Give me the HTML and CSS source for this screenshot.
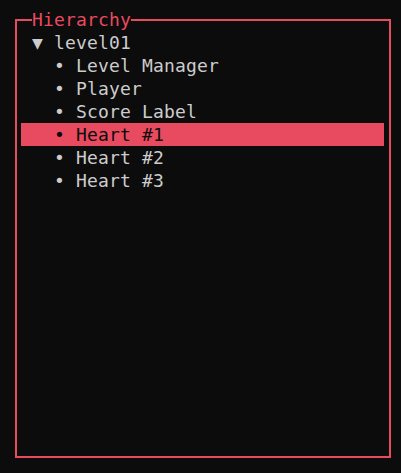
FILE: index.html
```html
<!DOCTYPE html>
<html>
<head>
<meta charset="utf-8">
<link rel="stylesheet" href="styles.css">
</head>
<body>
<div class="panel">
  <div class="title">Hierarchy</div>
  <ul class="tree">
    <li class="row root"><span class="mark">▼</span> level01</li>
    <li class="row child"><span class="mark">•</span> Level Manager</li>
    <li class="row child"><span class="mark">•</span> Player</li>
    <li class="row child"><span class="mark">•</span> Score Label</li>
    <li class="row child selected"><span class="mark">•</span> Heart #1</li>
    <li class="row child"><span class="mark">•</span> Heart #2</li>
    <li class="row child"><span class="mark">•</span> Heart #3</li>
  </ul>
</div>
</body>
</html>
```
FILE: styles.css
```css
html, body {
  margin: 0;
  padding: 0;
  background: #0c0c0c;
}
body {
  font-family: "DejaVu Sans Mono", "Liberation Mono", monospace;
  font-size: 18px;
  letter-spacing: 0.16px;
  line-height: 23px;
  color: #cccccc;
  padding: 19px 0 0 15px;
}
.panel {
  position: relative;
  width: 372px;
  height: 435px;
  border: 2px solid #e84a5f;
}
.title {
  position: absolute;
  top: -13px;
  left: 15px;
  height: 23px;
  background: #0c0c0c;
  color: #e84a5f;
  white-space: pre;
}
.tree {
  list-style: none;
  margin: 0;
  padding: 10px 5px 0 4px;
}
.row {
  height: 23px;
  white-space: pre;
}
.root {
  padding-left: 11px;
}
.child {
  padding-left: 33px;
}
.selected {
  background: #e84a5f;
  color: #0c0c0c;
}
```
